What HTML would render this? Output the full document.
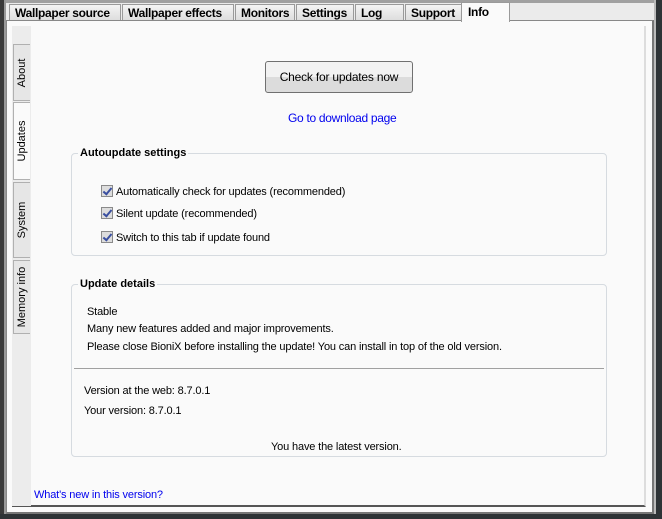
<!DOCTYPE html>
<html><head><style>
*{margin:0;padding:0;box-sizing:border-box}
body{width:662px;height:519px;background:#ebebeb;position:relative;overflow:hidden;font-family:"Liberation Sans",sans-serif;font-size:11px;color:#000}
.a{position:absolute}
.tab{position:absolute;top:4px;height:17px;background:linear-gradient(#f4f4f4,#dcdcdc);border:1px solid #9a9a9a;border-bottom:none;font-weight:bold;font-size:12px;line-height:16px;padding-left:5px;letter-spacing:-0.3px}
.st{position:absolute;left:13px;width:17px;background:#e6e6e6;border:1px solid #b0b0b0;border-right:none}
.st span{position:absolute;left:50%;top:50%;transform:translate(-50%,-50%) rotate(-90deg);white-space:nowrap;font-size:11px}
.grp{position:absolute;border:1px solid #d6dbe0;border-radius:4px}
.lg{position:absolute;top:-7px;left:6px;background:#fafafa;padding:0 2px;font-weight:bold;font-size:11px}
.cb{position:absolute;left:101px;font-size:11px;letter-spacing:-0.15px}
.cb i{display:inline-block;width:12px;height:12px;border:1px solid #8a8a8a;background:#ddd;vertical-align:-2px;margin-right:3px;position:relative}
.cb i:after{content:"";position:absolute;left:3px;top:0px;width:3px;height:7px;border:solid #3a4fa0;border-width:0 2px 2px 0;transform:rotate(40deg)}
.link{color:#0000ee}
.t{letter-spacing:-0.15px}
</style></head><body>
<div class="a" style="left:0;top:0;width:6px;height:519px;background:#3a3a3a;border-right:2px solid #999"></div>
<div class="a" style="right:0;top:0;width:8px;height:519px;background:#2e3336;border-left:2px solid #bbb"></div>
<div class="a" style="left:0;bottom:0;width:662px;height:5px;background:#2e3336"></div>
<div class="a" style="left:6px;top:0;width:648px;height:3px;background:#a0a0a0"></div>
<div class="tab" style="left:9px;width:112px">Wallpaper source</div>
<div class="tab" style="left:122px;width:112px">Wallpaper effects</div>
<div class="tab" style="left:235px;width:60px">Monitors</div>
<div class="tab" style="left:296px;width:58px">Settings</div>
<div class="tab" style="left:355px;width:49px">Log</div>
<div class="tab" style="left:405px;width:57px">Support</div>
<div class="a" style="left:6px;top:20px;width:648px;height:494px;background:#fafafa;border:1px solid #888;border-right:2px solid #777;border-bottom:2px solid #777"></div>
<div class="tab" style="left:461px;top:2px;height:20px;width:49px;background:#fafafa;line-height:18px;padding-left:6px">Info</div>
<div class="a" style="left:12px;top:26px;width:634px;height:481px;background:#fafafa;border-right:2px solid #ddd;border-bottom:2px solid #555"></div>
<div class="a" style="left:12px;top:26px;width:19px;height:480px;background:#ececec"></div>
<div class="st" style="top:44px;height:57px"><span>About</span></div>
<div class="st" style="top:102px;height:78px;background:#fafafa"><span>Updates</span></div>
<div class="st" style="top:182px;height:76px"><span>System</span></div>
<div class="st" style="top:260px;height:74px"><span>Memory info</span></div>
<div class="a" style="left:265px;top:61px;width:148px;height:32px;border:1px solid #707070;border-radius:3px;background:linear-gradient(#f2f2f2 50%,#dcdcdc 50%);text-align:center;line-height:30px;font-size:12px;letter-spacing:-0.2px">Check for updates now</div>
<div class="a link" style="left:288px;top:111px;font-size:12px;letter-spacing:-0.3px">Go to download page</div>
<div class="grp" style="left:71px;top:153px;width:536px;height:103px"><div class="lg">Autoupdate settings</div></div>
<div class="cb" style="top:185px"><i></i>Automatically check for updates (recommended)</div>
<div class="cb" style="top:207px"><i></i>Silent update (recommended)</div>
<div class="cb" style="top:231px"><i></i>Switch to this tab if update found</div>
<div class="grp" style="left:71px;top:284px;width:536px;height:173px"><div class="lg">Update details</div></div>
<div class="a t" style="left:87px;top:306px">Stable</div>
<div class="a t" style="left:87px;top:323px">Many new features added and major improvements.</div>
<div class="a t" style="left:87px;top:341px">Please close BioniX before installing the update! You can install in top of the old version.</div>
<div class="a" style="left:74px;top:368px;width:530px;height:1px;background:#a0a0a0"></div>
<div class="a t" style="left:84px;top:385px">Version at the web: 8.7.0.1</div>
<div class="a t" style="left:84px;top:405px">Your version: 8.7.0.1</div>
<div class="a t" style="left:271px;top:441px">You have the latest version.</div>
<div class="a link t" style="left:34px;top:489px">What's new in this version?</div>
</body></html>
